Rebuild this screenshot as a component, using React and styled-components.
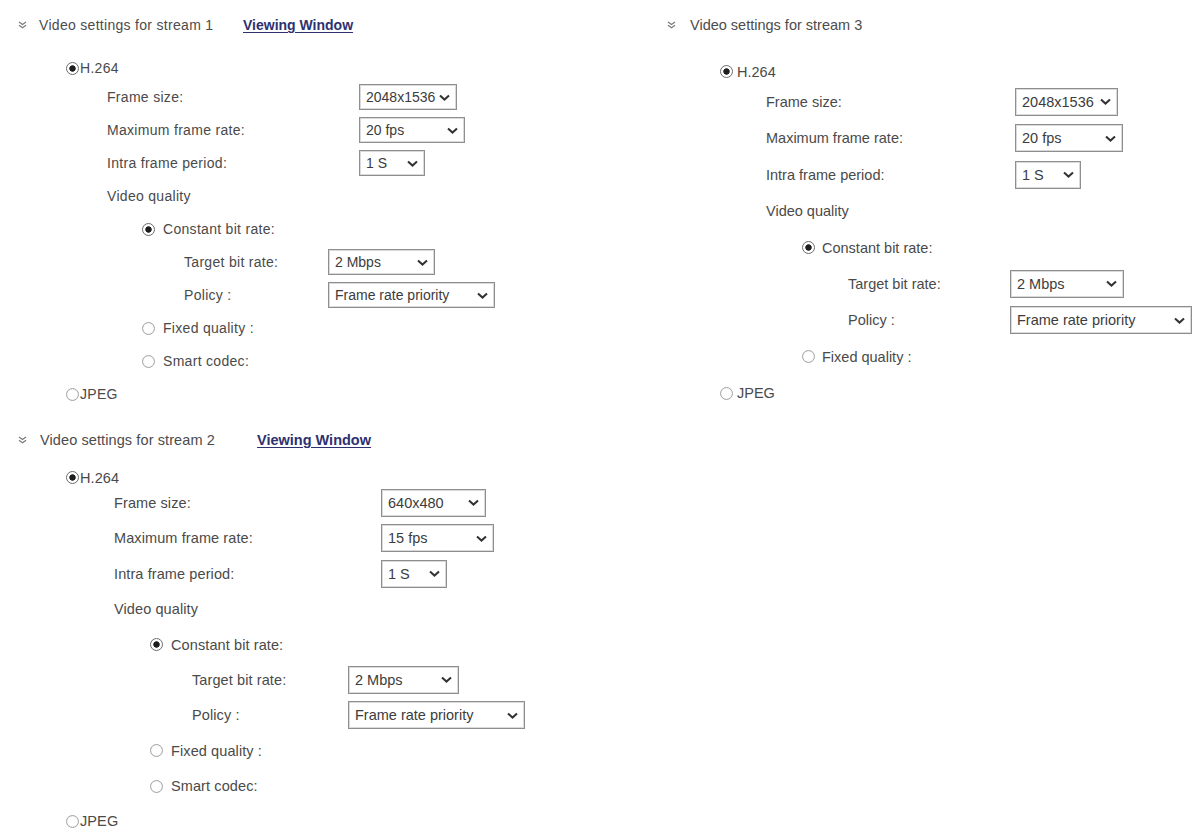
import React from 'react';
import styled, { createGlobalStyle } from 'styled-components';

const Global = createGlobalStyle`
  html, body { margin: 0; padding: 0; background: #ffffff; }
  body {
    font-family: "Liberation Sans", Arial, "DejaVu Sans", sans-serif;
    color: #4a4a4a;
  }
  * { box-sizing: border-box; }
`;

const Page = styled.div`
  display: flex;
  width: 1201px;
  height: 834px;
  overflow: hidden;
  background: #ffffff;
`;

const Column = styled.div`
  display: flex;
  flex-direction: column;
  flex: none;
  width: ${(p) => p.$w}px;
`;

const StreamBlock = styled.section`
  display: flex;
  flex-direction: column;
  font-size: ${(p) => p.$fs}px;
  letter-spacing: ${(p) => p.$ls || 0}px;
`;

const Header = styled.div`
  display: flex;
  align-items: center;
  height: ${(p) => p.$h}px;
  padding-left: ${(p) => p.$x}px;
  white-space: nowrap;
`;

const Title = styled.span`
  flex: none;
  margin-left: ${(p) => p.$gap}px;
  width: ${(p) => (p.$w ? `${p.$w}px` : 'auto')};
  color: #4c4c4c;
`;

const ViewLink = styled.a`
  font-weight: bold;
  letter-spacing: 0;
  color: #2d3170;
  text-decoration: underline;
  text-underline-offset: 2px;
  cursor: pointer;
`;

const Row = styled.div`
  display: flex;
  align-items: center;
  height: ${(p) => p.$h}px;
  margin-top: ${(p) => p.$mt || 0}px;
  padding-left: ${(p) => p.$x}px;
  white-space: nowrap;
`;

const Label = styled.span`
  flex: none;
  width: ${(p) => (p.$w ? `${p.$w}px` : 'auto')};
  color: #4a4a4a;
`;

const SelectBox = styled.div`
  flex: none;
  display: flex;
  align-items: center;
  justify-content: space-between;
  width: ${(p) => p.$w}px;
  height: ${(p) => p.$h}px;
  padding: 0 6px 0 6px;
  border: 1px solid #8e8e8e;
  box-shadow: inset 0 0 0 1px #dadada;
  background: #ffffff;
  color: #3c3c3c;
  letter-spacing: 0;
`;

const SelectValue = styled.span`
  white-space: nowrap;
`;

const RadioMark = styled.span`
  flex: none;
  display: inline-block;
  width: ${(p) => p.$s}px;
  height: ${(p) => p.$s}px;
  margin-right: ${(p) => p.$gap}px;
  border-radius: 50%;
  border: 1px solid ${(p) => (p.$checked ? '#6c6c6c' : '#a4a4a4')};
  background: ${(p) =>
    p.$checked
      ? 'radial-gradient(circle, #1e1e1e 0, #1e1e1e 2.8px, #ffffff 3.6px)'
      : '#ffffff'};
  box-shadow: ${(p) => (p.$checked ? 'none' : 'inset 0 0 1px #c8c8c8')};
`;

const HeaderChevron = () => (
  <svg width="9" height="8" viewBox="0 0 9 8" aria-hidden="true">
    <path d="M1 1 L4.5 3.5 L8 1" fill="none" stroke="#7a7a7a" strokeWidth="1.2" />
    <path d="M1 4.2 L4.5 6.8 L8 4.2" fill="none" stroke="#7a7a7a" strokeWidth="1.2" />
  </svg>
);

const SelectChevron = () => (
  <svg width="11" height="7" viewBox="0 0 11 7" aria-hidden="true">
    <path d="M1 1.4 L5.5 5.6 L10 1.4" fill="none" stroke="#333" strokeWidth="2" />
  </svg>
);

const Select = ({ w, h, value }) => (
  <SelectBox $w={w} $h={h}>
    <SelectValue>{value}</SelectValue>
    <SelectChevron />
  </SelectBox>
);

const Radio = ({ checked, gap, children }) => (
  <>
    <RadioMark $s={13} $gap={gap} $checked={checked} />
    <Label>{children}</Label>
  </>
);

const Stream = ({ c }) => {
  const fieldLabelW = c.selectX - c.labelX;
  const subLabelW = c.subSelectX - c.subX;
  return (
    <StreamBlock $fs={c.fs} $ls={c.ls}>
      <Header $h={c.headerH} $x={c.chevX}>
        <HeaderChevron />
        <Title $gap={c.titleX - c.chevX - 9} $w={c.linkX ? c.linkX - c.titleX : 0}>
          {c.title}
        </Title>
        {c.linkX ? <ViewLink>Viewing Window</ViewLink> : null}
      </Header>

      <Row $h={c.h1} $mt={c.mt} $x={c.codecX}>
        <Radio checked gap={c.codecGap}>H.264</Radio>
      </Row>

      <Row $h={c.rowH} $x={c.labelX}>
        <Label $w={fieldLabelW}>Frame size:</Label>
        <Select w={c.widths.frame} h={c.selH} value={c.values.frame} />
      </Row>
      <Row $h={c.rowH} $x={c.labelX}>
        <Label $w={fieldLabelW}>Maximum frame rate:</Label>
        <Select w={c.widths.max} h={c.selH} value={c.values.max} />
      </Row>
      <Row $h={c.rowH} $x={c.labelX}>
        <Label $w={fieldLabelW}>Intra frame period:</Label>
        <Select w={c.widths.intra} h={c.selH} value={c.values.intra} />
      </Row>
      <Row $h={c.rowH} $x={c.labelX}>
        <Label>Video quality</Label>
      </Row>

      <Row $h={c.rowH} $x={c.qX}>
        <Radio checked gap={c.qGap}>Constant bit rate:</Radio>
      </Row>
      <Row $h={c.rowH} $x={c.subX}>
        <Label $w={subLabelW}>Target bit rate:</Label>
        <Select w={c.widths.target} h={c.selH} value={c.values.target} />
      </Row>
      <Row $h={c.rowH} $x={c.subX}>
        <Label $w={subLabelW}>Policy :</Label>
        <Select w={c.widths.policy} h={c.selH} value={c.values.policy} />
      </Row>

      <Row $h={c.rowH} $x={c.qX}>
        <Radio gap={c.qGap}>Fixed quality :</Radio>
      </Row>
      {c.smart ? (
        <Row $h={c.rowH} $x={c.qX}>
          <Radio gap={c.qGap}>Smart codec:</Radio>
        </Row>
      ) : null}

      <Row $h={c.rowH} $x={c.codecX}>
        <Radio gap={c.codecGap}>JPEG</Radio>
      </Row>
    </StreamBlock>
  );
};

const stream1 = {
  title: 'Video settings for stream 1',
  fs: 14,
  ls: 0.3,
  headerH: 50,
  chevX: 18,
  titleX: 39,
  linkX: 243,
  mt: 5.5,
  h1: 25,
  rowH: 33,
  codecX: 66,
  codecGap: 1,
  labelX: 107,
  selectX: 359,
  qX: 142,
  qGap: 8,
  subX: 184,
  subSelectX: 328,
  selH: 26,
  smart: true,
  widths: { frame: 98, max: 106, intra: 66, target: 107, policy: 167 },
  values: {
    frame: '2048x1536',
    max: '20 fps',
    intra: '1 S',
    target: '2 Mbps',
    policy: 'Frame rate priority',
  },
};

const stream2 = {
  title: 'Video settings for stream 2',
  fs: 14.5,
  ls: 0.1,
  headerH: 59,
  chevX: 18,
  titleX: 40,
  linkX: 257,
  mt: 1.2,
  h1: 14.6,
  rowH: 35.4,
  codecX: 66,
  codecGap: 1,
  labelX: 114,
  selectX: 381,
  qX: 150,
  qGap: 8,
  subX: 192,
  subSelectX: 348,
  selH: 28,
  smart: true,
  widths: { frame: 105, max: 113, intra: 66, target: 111, policy: 177 },
  values: {
    frame: '640x480',
    max: '15 fps',
    intra: '1 S',
    target: '2 Mbps',
    policy: 'Frame rate priority',
  },
};

const stream3 = {
  title: 'Video settings for stream 3',
  fs: 14.5,
  ls: 0,
  headerH: 50,
  chevX: 18,
  titleX: 41,
  linkX: 0,
  mt: 10.2,
  h1: 23.6,
  rowH: 36.4,
  codecX: 71,
  codecGap: 4,
  labelX: 117,
  selectX: 366,
  qX: 153,
  qGap: 7,
  subX: 199,
  subSelectX: 361,
  selH: 28,
  smart: false,
  widths: { frame: 103, max: 108, intra: 66, target: 114, policy: 182 },
  values: {
    frame: '2048x1536',
    max: '20 fps',
    intra: '1 S',
    target: '2 Mbps',
    policy: 'Frame rate priority',
  },
};

export default function App() {
  return (
    <>
      <Global />
      <Page>
        <Column $w={649}>
          <Stream c={stream1} />
          <Stream c={stream2} />
        </Column>
        <Column $w={552}>
          <Stream c={stream3} />
        </Column>
      </Page>
    </>
  );
}
